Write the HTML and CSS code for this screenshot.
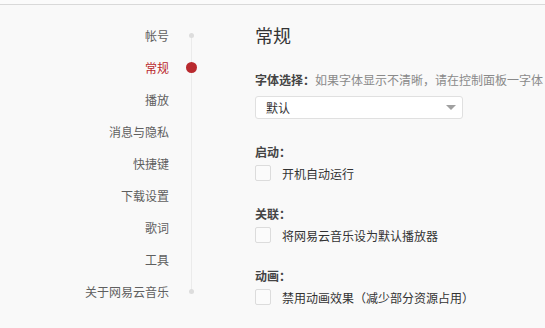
FILE: index.html
```html
<!DOCTYPE html>
<html lang="zh-CN">

<head>
    <meta charset="UTF-8">
    <title>设置</title>
    <link rel="stylesheet" href="styles.css">
</head>

<body>
    <div class="topbar"></div>

    <div class="layout">
        <nav class="sidebar">
            <ul class="nav-list">
                <li class="nav-item"><span class="nav-label">帐号</span><span class="marker"><i class="dot"></i></span></li>
                <li class="nav-item active"><span class="nav-label">常规</span><span class="marker"><i class="dot"></i></span></li>
                <li class="nav-item"><span class="nav-label">播放</span><span class="marker"></span></li>
                <li class="nav-item"><span class="nav-label">消息与隐私</span><span class="marker"></span></li>
                <li class="nav-item"><span class="nav-label">快捷键</span><span class="marker"></span></li>
                <li class="nav-item"><span class="nav-label">下载设置</span><span class="marker"></span></li>
                <li class="nav-item"><span class="nav-label">歌词</span><span class="marker"></span></li>
                <li class="nav-item"><span class="nav-label">工具</span><span class="marker"></span></li>
                <li class="nav-item"><span class="nav-label">关于网易云音乐</span><span class="marker"><i class="dot"></i></span></li>
            </ul>
        </nav>

        <main class="content">
            <h2 class="page-title">常规</h2>

            <div class="field">
                <div class="field-title">字体选择：<span class="hint">如果字体显示不清晰，请在控制面板一字体</span></div>
                <div class="select">
                    <span>默认</span>
                    <span class="arrow"></span>
                </div>
            </div>

            <div class="section">
                <div class="field-title">启动：</div>
                <label class="check-row"><span class="checkbox"></span>开机自动运行</label>
            </div>

            <div class="section">
                <div class="field-title">关联：</div>
                <label class="check-row"><span class="checkbox"></span>将网易云音乐设为默认播放器</label>
            </div>

            <div class="section">
                <div class="field-title">动画：</div>
                <label class="check-row"><span class="checkbox"></span>禁用动画效果（减少部分资源占用）</label>
            </div>
        </main>
    </div>
</body>

</html>
```

FILE: styles.css
```css
:root {
    --accent-color: #b92a2f;
    --text-color: #333333;
    --nav-color: #5f5f5f;
    --hint-color: #8a8a8a;
    --border-color: #dedede;
    --background-color: #f9f9f9;
}

body {
    margin: 0;
    font-family: "Noto Sans CJK SC", "Microsoft YaHei", sans-serif;
    font-size: 12px;
    color: var(--text-color);
    background-color: var(--background-color);
    overflow: hidden;
}

.topbar {
    height: 4px;
    background: #fbfbfb;
    border-bottom: 1px solid #d9d9d9;
}

.layout {
    display: flex;
}

/* left navigation */
.sidebar {
    width: 213px;
    flex-shrink: 0;
    padding-top: 14px;
}

.nav-list {
    list-style: none;
    margin: 0;
    padding: 0;
    position: relative;
}

.nav-list::before {
    content: "";
    position: absolute;
    left: 191px;
    top: 16px;
    bottom: 16px;
    width: 1px;
    background: #ebebeb;
}

.nav-item {
    display: flex;
    align-items: center;
    height: 32px;
    color: var(--nav-color);
}

.nav-label {
    width: 169px;
    padding-right: 1px;
    text-align: right;
    white-space: nowrap;
}

.marker {
    width: 43px;
    display: flex;
    justify-content: center;
    position: relative;
}

.dot {
    display: block;
    width: 5px;
    height: 5px;
    border-radius: 50%;
    background: #dddddd;
}

.nav-item.active {
    color: var(--accent-color);
}

.nav-item.active .dot {
    width: 11px;
    height: 11px;
    background: var(--accent-color);
}

/* settings content */
.content {
    flex: 1;
    min-width: 0;
    padding-left: 42px;
    padding-top: 18px;
    white-space: nowrap;
    overflow: hidden;
}

.page-title {
    margin: 0 0 24px;
    font-size: 18px;
    line-height: 24px;
    font-weight: normal;
    color: #333;
}

.field-title {
    font-weight: bold;
    line-height: 18px;
    color: #444;
}

.hint {
    font-weight: normal;
    color: var(--hint-color);
}

.select {
    margin-top: 7px;
    width: 190px;
    height: 21px;
    padding: 0 6px 0 10px;
    display: flex;
    align-items: center;
    justify-content: space-between;
    background: #ffffff;
    border: 1px solid #e0e0e0;
    border-radius: 3px;
    color: #333;
}

.arrow {
    width: 0;
    height: 0;
    border-left: 5px solid transparent;
    border-right: 5px solid transparent;
    border-top: 5px solid #a0a0a0;
}

.section {
    margin-top: 24px;
}

.section + .section {
    margin-top: 21px;
}

.check-row {
    display: flex;
    align-items: center;
    height: 22px;
    margin-top: 1px;
    color: var(--text-color);
}

.checkbox {
    width: 14px;
    height: 14px;
    margin-right: 11px;
    border: 1px solid #dcdcdc;
    border-radius: 2px;
    background: #fbfbfb;
}
```
